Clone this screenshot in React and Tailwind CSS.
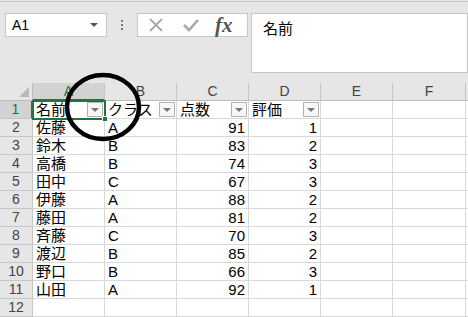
const cols = ["A", "B", "C", "D", "E", "F"];
const rows = [
  ["佐藤", "A", 91, 1],
  ["鈴木", "B", 83, 2],
  ["高橋", "B", 74, 3],
  ["田中", "C", 67, 3],
  ["伊藤", "A", 88, 2],
  ["藤田", "A", 81, 2],
  ["斉藤", "C", 70, 3],
  ["渡辺", "B", 85, 2],
  ["野口", "B", 66, 3],
  ["山田", "A", 92, 1],
];

const font = { fontFamily: '"Liberation Sans", "Noto Sans CJK JP", sans-serif' };

function FilterBtn() {
  return (
    <div className="flex h-[15px] w-[16px] items-center justify-center border border-[#b4b4b4] bg-[#f7f7f7]">
      <div className="h-0 w-0 border-x-[4px] border-t-[4px] border-x-transparent border-t-[#777]"></div>
    </div>
  );
}

function Cell({ children, className = "" }) {
  return (
    <div className={`flex h-[18px] items-center border-r border-b border-[#d8d8d8] bg-white px-[3px] text-[15px] leading-none text-black ${className}`}>
      {children}
    </div>
  );
}

export default function App() {
  return (
    <div className="relative h-[317px] w-[468px] overflow-hidden bg-[#e6e6e6]" style={font}>
      {/* Formula bar */}
      <div className="mt-[1px] border-t border-[#c8c8c8]"></div>
      <div className="flex h-[70px] items-start pt-[11px]">
        <div className="ml-[5px] flex h-[24px] w-[102px] items-center justify-between border border-[#c6c6c6] bg-white pl-[6px] pr-[8px] text-[14px] text-black">
          <span>A1</span>
          <div className="h-0 w-0 border-x-[4px] border-t-[4px] border-x-transparent border-t-[#555]"></div>
        </div>
        <div className="flex w-[30px] flex-col items-center gap-[2px] pt-[7px]">
          <div className="h-[2px] w-[2px] bg-[#777]"></div>
          <div className="h-[2px] w-[2px] bg-[#777]"></div>
          <div className="h-[2px] w-[2px] bg-[#777]"></div>
        </div>
        <div className="flex h-[24px] w-[111px] items-center border border-[#c6c6c6] bg-white pl-[10px]">
          <svg width="16" height="16" viewBox="0 0 16 16" className="mr-[18px]">
            <path d="M2 2 L14 14 M14 2 L2 14" stroke="#a8a8a8" strokeWidth="1.8" fill="none" />
          </svg>
          <svg width="18" height="16" viewBox="0 0 18 16" className="mr-[15px]">
            <path d="M2 8 L7 13 L16 3" stroke="#a8a8a8" strokeWidth="2.6" fill="none" />
          </svg>
          <span className="text-[21px] font-bold italic leading-none text-[#555]" style={{ fontFamily: '"Liberation Serif", serif' }}>
            fx
          </span>
        </div>
        <div className="ml-[3px] h-[60px] flex-1 border border-[#c6c6c6] bg-white pl-[11px] pt-[4px] text-[15px] text-black">
          名前
        </div>
      </div>

      {/* Grid */}
      <div className="mt-[11px] grid grid-cols-[33px_72px_72px_72px_72px_72px_73px_20px]">
        <div className="relative h-[18px] border-r border-b border-[#bcbcbc] bg-[#e6e6e6]">
          <div className="absolute bottom-[3px] right-[3px] h-0 w-0 border-l-[10px] border-b-[10px] border-l-transparent border-b-[#b9b9b9]"></div>
        </div>
        {cols.map((c, i) => (
          <div
            key={c}
            className={`flex h-[18px] items-center justify-center border-r border-[#c6c6c6] text-[14px] ${
              i === 0 ? "border-b-2 border-b-[#217346] bg-[#d2d2d2] text-[#217346]" : "border-b border-b-[#bcbcbc] bg-[#e6e6e6] text-[#444]"
            }`}
          >
            {c}
          </div>
        ))}
        <div className="h-[18px] border-b border-[#bcbcbc] bg-[#e6e6e6]"></div>

        {/* Row 1 headers with filters */}
        <div className="flex h-[18px] items-center justify-center border-r-2 border-b border-r-[#217346] border-b-[#c6c6c6] bg-[#d2d2d2] text-[14px] text-[#217346]">1</div>
        {["名前", "クラス", "点数", "評価"].map((h) => (
          <Cell key={h} className="justify-between pr-[1px]">
            <span>{h}</span>
            <FilterBtn />
          </Cell>
        ))}
        <Cell />
        <Cell />
        <Cell className="border-r-0" />

        {rows.map((r, i) => (
          <div key={i} className="contents">
            <div className="flex h-[18px] items-center justify-center border-r border-b border-[#c6c6c6] bg-[#e6e6e6] text-[14px] text-[#444]">{i + 2}</div>
            <Cell>{r[0]}</Cell>
            <Cell>{r[1]}</Cell>
            <Cell className="justify-end">{r[2]}</Cell>
            <Cell className="justify-end">{r[3]}</Cell>
            <Cell />
            <Cell />
            <Cell className="border-r-0" />
          </div>
        ))}
        <div className="flex h-[18px] items-center justify-center border-r border-b border-[#c6c6c6] bg-[#e6e6e6] text-[14px] text-[#444]">12</div>
        <Cell />
        <Cell />
        <Cell />
        <Cell />
        <Cell />
        <Cell />
        <Cell className="border-r-0" />
      </div>

      {/* Active cell A1 */}
      <div className="absolute left-[32px] top-[100px] h-[20px] w-[74px] border-2 border-[#217346]">
        <div className="absolute -bottom-[4px] -right-[4px] h-[6px] w-[6px] border border-white bg-[#217346]"></div>
      </div>

      {/* Annotation circle */}
      <svg className="absolute left-0 top-0" width="468" height="317">
        <ellipse cx="103" cy="107" rx="36" ry="32" stroke="#000" strokeWidth="4.5" fill="none" />
      </svg>
    </div>
  );
}
